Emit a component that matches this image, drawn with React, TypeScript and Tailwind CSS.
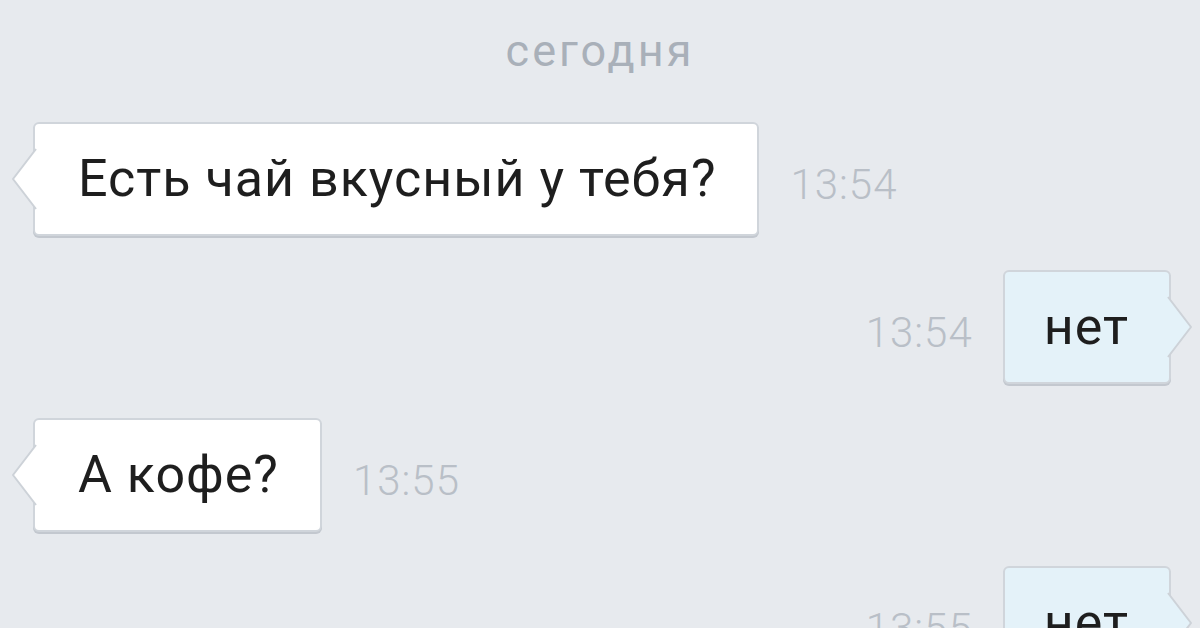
import React from "react";

function TailLeft({ bg }: { bg: string }) {
  return (
    <svg className="absolute -left-[24px] top-1/2 -translate-y-1/2" width="26" height="64" viewBox="0 0 26 64">
      <polygon points="25,2 2,32 25,62" fill={bg} />
      <polyline points="25,2 2,32 25,62" fill="none" stroke="#cdd2d8" strokeWidth="2" strokeLinejoin="round" />
    </svg>
  );
}

function TailRight({ bg }: { bg: string }) {
  return (
    <svg className="absolute -right-[24px] top-1/2 -translate-y-1/2" width="26" height="64" viewBox="0 0 26 64">
      <polygon points="1,2 24,32 1,62" fill={bg} />
      <polyline points="1,2 24,32 1,62" fill="none" stroke="#cdd2d8" strokeWidth="2" strokeLinejoin="round" />
    </svg>
  );
}

function Incoming({ text, time }: { text: string; time: string }) {
  return (
    <div className="flex items-center pl-[33px]">
      <div className="relative h-[114px] flex items-center pl-[43px] pr-[41px] bg-white border-2 border-[#d0d5db] rounded-[6px] shadow-[0_2px_0_#c3c8cf]">
        <TailLeft bg="#ffffff" />
        <span className="text-[52px] tracking-[1px] text-[#1e1e1e] leading-none">{text}</span>
      </div>
      <span className="ml-[31px] mt-[12px] text-[42px] tracking-[1px] font-light text-[#b9bfc7] leading-none">{time}</span>
    </div>
  );
}

function Outgoing({ text, time }: { text: string; time: string }) {
  return (
    <div className="flex items-center justify-end pr-[29px]">
      <span className="mr-[30px] mt-[12px] text-[42px] tracking-[1px] font-light text-[#b9bfc7] leading-none">{time}</span>
      <div className="relative h-[114px] flex items-center pl-[39px] pr-[40px] bg-[#e4f2f9] border-2 border-[#d0d5db] rounded-[6px] shadow-[0_2px_0_#c3c8cf]">
        <TailRight bg="#e4f2f9" />
        <span className="text-[52px] tracking-[1px] text-[#1e1e1e] leading-none">{text}</span>
      </div>
    </div>
  );
}

export default function App() {
  return (
    <div
      className="w-[1200px] h-[628px] overflow-hidden bg-[#e7eaee] flex flex-col"
      style={{ fontFamily: "Roboto, 'Noto Sans', sans-serif" }}
    >
      <div className="pt-[28px] text-center text-[45px] tracking-[3px] text-[#a9b0b9] leading-none">сегодня</div>
      <div className="flex flex-col gap-[34px] mt-[49px]">
        <Incoming text="Есть чай вкусный у тебя?" time="13:54" />
        <Outgoing text="нет" time="13:54" />
        <Incoming text="А кофе?" time="13:55" />
        <Outgoing text="нет" time="13:55" />
      </div>
    </div>
  );
}
